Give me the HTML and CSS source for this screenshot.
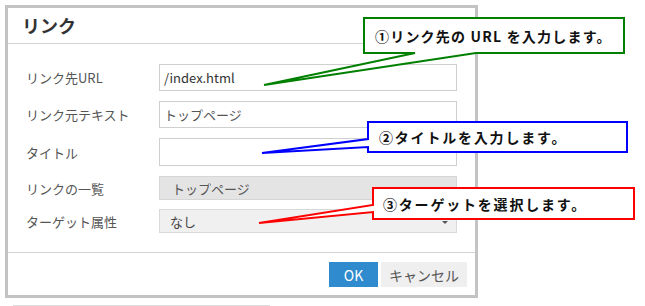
FILE: index.html
```html
<!DOCTYPE html>
<html lang="ja">
<head>
<meta charset="utf-8">
<title>リンク</title>
<link rel="stylesheet" href="styles.css">
</head>
<body>
<div class="page">
  <div class="dialog">
    <div class="dlg-head"><h1 class="dlg-title">リンク</h1></div>
    <div class="dlg-body">
      <div class="row"><span class="label">リンク先URL</span><div class="field text dark">/index.html</div></div>
      <div class="row"><span class="label">リンク元テキスト</span><div class="field text">トップページ</div></div>
      <div class="row tall"><span class="label">タイトル</span><div class="field text"></div></div>
      <div class="row short"><span class="label">リンクの一覧</span><div class="field list">トップページ</div></div>
      <div class="row short tight"><span class="label">ターゲット属性</span><div class="field select">なし</div></div>
    </div>
    <div class="dlg-foot">
      <button class="btn btn-ok">OK</button>
      <button class="btn btn-cancel">キャンセル</button>
    </div>
  </div>
  <div class="under-line"></div>

  <svg class="callout-shapes" width="645" height="306" viewBox="0 0 645 306">
    <path d="M364,18 H624 V53 H476 L264,85 L415,53 H364 Z" fill="#fff" stroke="#008000" stroke-width="2"/>
    <path d="M368,122 H627 V152 H368 V147 L262,153 L368,139 Z" fill="#fff" stroke="#0000ff" stroke-width="2"/>
    <path d="M373,188 H634 V219 H373 V212 L259,223 L373,205 Z" fill="#fff" stroke="#ff0000" stroke-width="2"/>
  </svg>
  <div class="callout c1">①リンク先の URL を入力します。</div>
  <div class="callout c2">②タイトルを入力します。</div>
  <div class="callout c3">③ターゲットを選択します。</div>
</div>
</body>
</html>
```

FILE: styles.css
```css
* { box-sizing: border-box; }
html, body {
  margin: 0;
  padding: 0;
  background: #fff;
}
body {
  font-family: "Noto Sans CJK JP", "Noto Sans", sans-serif;
  width: 645px;
  height: 306px;
  overflow: hidden;
}
.page {
  position: relative;
  width: 645px;
  height: 306px;
  padding: 5px 0 0 5px;
}
.dialog {
  width: 473px;
  border: 3px solid #c3c3c3;
  background: #fff;
  display: flex;
  flex-direction: column;
}
.dlg-head {
  height: 36px;
  border-bottom: 1px solid #d3d3d3;
  display: flex;
  align-items: center;
  padding-left: 14px;
}
.dlg-title {
  margin: 0;
  font-size: 18px;
  font-weight: 700;
  color: #333;
  line-height: 1;
  position: relative;
  top: -1px;
}
.dlg-body {
  padding: 20px 18px 19px 18px;
  display: flex;
  flex-direction: column;
  gap: 10px;
}
.row {
  display: grid;
  grid-template-columns: 133px 298px;
  align-items: center;
  height: 27px;
}
.row.tall { height: 28px; }
.row.short { height: 24px; }
.row.tight { margin-top: -1px; }
.label {
  font-size: 13px;
  color: #555;
  line-height: 1;
}
.field {
  height: 100%;
  border: 1px solid #cfcfcf;
  font-size: 13px;
  color: #555;
  display: flex;
  align-items: center;
  line-height: 1;
  position: relative;
}
.field.text { background: #fff; padding-left: 4px; }
.field.dark { color: #333; }
.field.list {
  background: #e4e4e4;
  border-color: #d6d6d6;
  padding-left: 12px;
}
.field.select {
  background: #f0f0f0;
  border-color: #d9d9d9;
  padding-left: 10px;
  color: #444;
}
.field.select::after {
  content: "";
  position: absolute;
  right: 8px;
  top: 11px;
  border-left: 3px solid transparent;
  border-right: 3px solid transparent;
  border-top: 3px solid #555;
}
.dlg-foot {
  border-top: 1px solid #d3d3d3;
  padding: 9px 8px 8px 0;
  display: flex;
  justify-content: flex-end;
  gap: 3px;
}
.btn {
  height: 25px;
  border: none;
  font-family: "Noto Sans CJK JP", "Noto Sans", sans-serif;
  font-size: 14px;
  line-height: 1;
  padding: 0;
  margin: 0;
}
.btn-ok {
  width: 49px;
  background: #2f8bcd;
  color: #fff;
}
.btn-cancel {
  width: 86px;
  background: #efefef;
  color: #555;
}
.under-line {
  width: 257px;
  height: 1px;
  background: #dcdcdc;
  margin: 7px 0 0 8px;
}
.callout-shapes {
  position: absolute;
  left: 0;
  top: 0;
  pointer-events: none;
}
.callout {
  position: absolute;
  display: flex;
  align-items: center;
  font-size: 14px;
  font-weight: 700;
  letter-spacing: 1.2px;
  color: #111;
  line-height: 1;
  white-space: nowrap;
}
.c1 { left: 363px; top: 17px; width: 262px; height: 37px; padding-left: 12px; }
.c2, .c3 { letter-spacing: 1.8px; }
.c2 { left: 367px; top: 121px; width: 261px; height: 32px; padding-left: 12px; }
.c3 { left: 372px; top: 187px; width: 263px; height: 33px; padding-left: 11px; }
```
